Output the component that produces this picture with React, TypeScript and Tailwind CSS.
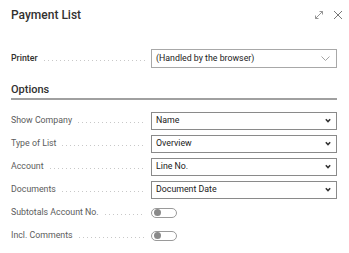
import React from "react";

const font = { fontFamily: 'Roboto, "Open Sans", Arial, sans-serif' };

function Leader() {
  return (
    <div className="flex-1 h-px mx-[6px] mt-[3px] bg-[linear-gradient(to_right,#c8c8c8_1px,transparent_1px)] bg-[length:4px_1px] bg-repeat-x" />
  );
}

function BoldChevron() {
  return (
    <svg width="6" height="5" viewBox="0 0 6 5" className="shrink-0">
      <path d="M0.8 1.2 L3 3.6 L5.2 1.2" fill="none" stroke="#333" strokeWidth="1.5" />
    </svg>
  );
}

function SelectRow({ label, value }: { label: string; value: string }) {
  return (
    <div className="flex items-center h-[23px]">
      <div className="w-[140px] flex items-center text-[8.8px] text-[#5c5c5c]">
        <span>{label}</span>
        <Leader />
      </div>
      <div className="w-[186px] h-[18px] border border-[#8a8a8a] flex items-center pl-[4px] pr-[5px] text-[8.8px] text-[#212121]">
        <span className="flex-1">{value}</span>
        <BoldChevron />
      </div>
    </div>
  );
}

function ToggleRow({ label }: { label: string }) {
  return (
    <div className="flex items-center h-[23px]">
      <div className="w-[140px] flex items-center text-[8.8px] text-[#5c5c5c]">
        <span>{label}</span>
        <Leader />
      </div>
      <div className="w-[26px] h-[10px] rounded-full border border-[#9a9a9a] flex items-center pl-[1.5px]">
        <div className="w-[7px] h-[7px] rounded-full bg-[#8a8a8a]" />
      </div>
    </div>
  );
}

export default function App() {
  return (
    <div className="w-[349px] h-[253px] bg-white pl-[11px] pr-[12px] overflow-hidden" style={font}>
      <div className="flex items-center h-[28px] pt-[1px]">
        <div className="flex-1 text-[12px] font-medium text-[#323130]">Payment List</div>
        <svg width="10" height="10" viewBox="0 0 10 10" className="mr-[9px]">
          <path d="M1.5 8.5 L8.5 1.5 M5.5 1.5 H8.5 V4.5 M1.5 5.5 V8.5 H4.5" fill="none" stroke="#8a8a8a" strokeWidth="0.9" />
        </svg>
        <svg width="10" height="10" viewBox="0 0 10 10" className="mr-[-6px]">
          <path d="M1 1 L9 9 M9 1 L1 9" fill="none" stroke="#777" strokeWidth="1" />
        </svg>
      </div>
      <div className="h-[20px]" />
      <div className="flex items-center h-[21px]">
        <div className="w-[140px] flex items-center text-[8.8px] text-[#323130] font-medium">
          <span>Printer</span>
          <Leader />
        </div>
        <div className="w-[186px] h-[19px] border border-[#a8a8a8] flex items-center pl-[4px] pr-[6px] text-[8.8px] text-[#212121]">
          <span className="flex-1">(Handled by the browser)</span>
          <svg width="9" height="5" viewBox="0 0 9 5">
            <path d="M0.5 0.5 L4.5 4.5 L8.5 0.5" fill="none" stroke="#9a9a9a" strokeWidth="0.9" />
          </svg>
        </div>
      </div>
      <div className="h-[12px]" />
      <div className="text-[11px] font-medium text-[#323130] h-[17px] leading-[17px]">Options</div>
      <div className="h-[2px] bg-[#a0a0a0]" />
      <div className="h-[9px]" />
      <SelectRow label="Show Company" value="Name" />
      <SelectRow label="Type of List" value="Overview" />
      <SelectRow label="Account" value="Line No." />
      <SelectRow label="Documents" value="Document Date" />
      <ToggleRow label="Subtotals Account No." />
      <ToggleRow label="Incl. Comments" />
    </div>
  );
}
